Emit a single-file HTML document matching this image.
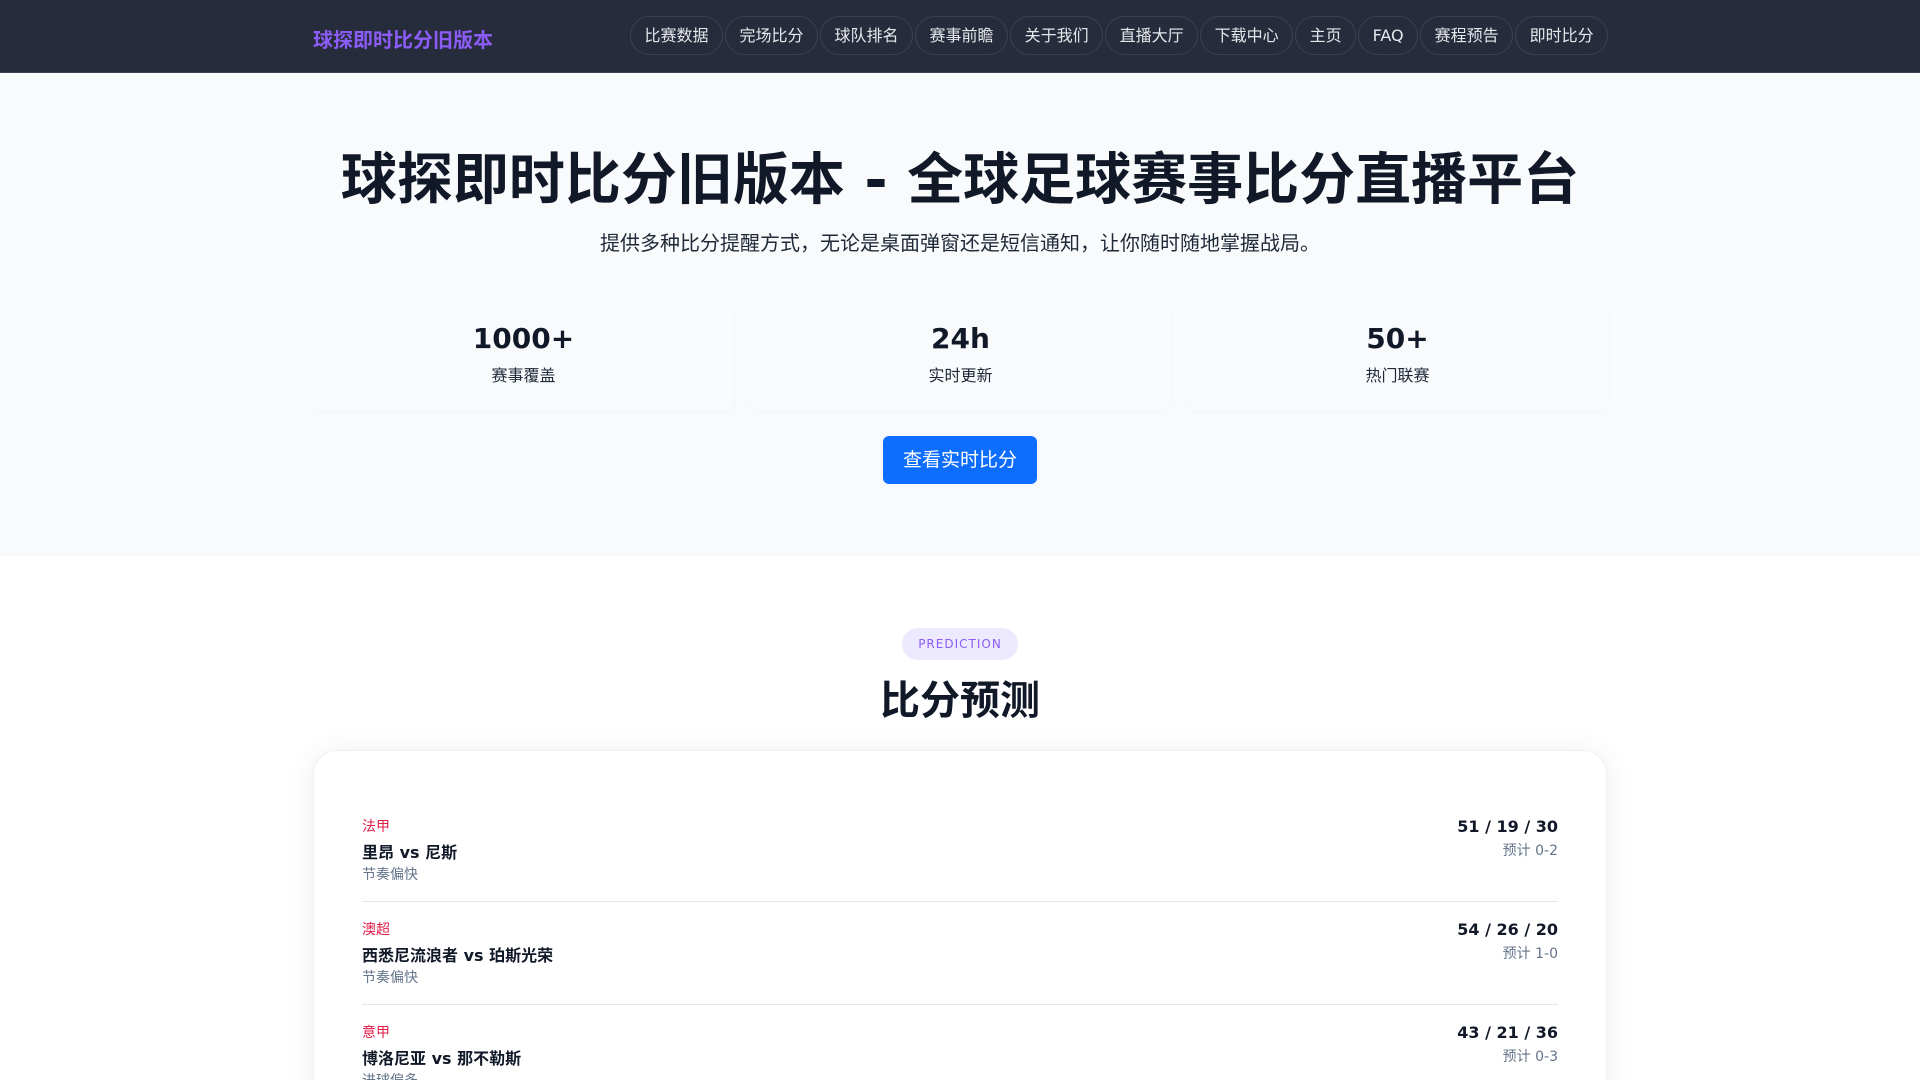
<!DOCTYPE html><html><head><meta charset="utf-8"><style>
*{margin:0;padding:0;box-sizing:border-box}
html{width:1920px;height:1080px;overflow:hidden}
body{width:1920px;height:1080px;overflow:hidden;position:relative;background:#fff;font-family:"DejaVu Sans","Noto Sans CJK SC",sans-serif;color:#111827}
.hd{height:73px;background:#262c3b;position:relative;border-bottom:1px solid #3a4152}
.logo{position:absolute;left:313px;top:24px;font-size:20px;font-weight:bold;color:#8b5cf6}
.nav{position:absolute;left:630px;top:16px;display:flex;gap:2px}
.nav span{height:39px;line-height:37px;padding:0 13.5px;border:1px solid #3a4152;border-radius:20px;color:#e5e7eb;font-size:16px}
.hero{background:#f8fafc;height:483px;text-align:center;position:relative}
h1{position:absolute;left:0;right:0;top:62px;font-size:56px;font-weight:bold;color:#111827}
.sub{position:absolute;left:0;right:0;top:154px;font-size:20px;color:#1f2937}
.stat{position:absolute;top:227px;width:421px;height:110px;background:#f8fafc;box-shadow:0 1px 4px rgba(0,0,0,.03);border-radius:8px;text-align:center}
.stat b{display:block;margin-top:22px;font-size:28px}
.stat i{display:block;font-style:normal;margin-top:7px;font-size:16px;color:#1f2937}
.btn{position:absolute;left:883px;top:363px;width:154px;height:48px;background:#0d6efd;color:#fff;border-radius:6px;font-size:19px;line-height:48px}
.pill{position:absolute;left:902px;top:628px;width:116px;height:32px;border-radius:16px;background:#ede9fe;color:#8b5cf6;font-size:12px;letter-spacing:1px;line-height:32px;text-align:center}
h2{position:absolute;left:0;right:0;top:668px;text-align:center;font-size:40px;font-weight:bold}
.card{position:absolute;left:313px;top:750px;width:1294px;height:360px;background:#fff;border-radius:24px;box-shadow:0 4px 30px rgba(0,0,0,.08);border:1px solid #eef0f3}
.row{position:absolute;left:48px;right:48px;height:86px;border-bottom:1px solid #e5e7eb}
.lg{position:absolute;top:0;color:#e11d48;font-size:14px}
.tm{position:absolute;top:23px;font-size:16px;font-weight:bold}
.nt{position:absolute;top:48px;font-size:14px;color:#64748b}
.sc{position:absolute;right:0;top:1px;font-size:16px;font-weight:bold}
.pr{position:absolute;right:0;top:24px;font-size:14px;color:#64748b}
</style></head><body>
<div class="hd"><div class="logo">球探即时比分旧版本</div>
<div class="nav"><span>比赛数据</span><span>完场比分</span><span>球队排名</span><span>赛事前瞻</span><span>关于我们</span><span>直播大厅</span><span>下载中心</span><span>主页</span><span>FAQ</span><span>赛程预告</span><span>即时比分</span></div></div>
<div class="hero">
<h1>球探即时比分旧版本 - 全球足球赛事比分直播平台</h1>
<div class="sub">提供多种比分提醒方式，无论是桌面弹窗还是短信通知，让你随时随地掌握战局。</div>
<div class="stat" style="left:313px"><b>1000+</b><i>赛事覆盖</i></div>
<div class="stat" style="left:750px"><b>24h</b><i>实时更新</i></div>
<div class="stat" style="left:1187px"><b>50+</b><i>热门联赛</i></div>
<div class="btn">查看实时比分</div>
</div>
<div class="pill">PREDICTION</div>
<h2>比分预测</h2>
<div class="card">
<div class="row" style="top:65px"><div class="lg">法甲</div><div class="tm">里昂 vs 尼斯</div><div class="nt">节奏偏快</div><div class="sc">51 / 19 / 30</div><div class="pr">预计 0-2</div></div>
<div class="row" style="top:168px"><div class="lg">澳超</div><div class="tm">西悉尼流浪者 vs 珀斯光荣</div><div class="nt">节奏偏快</div><div class="sc">54 / 26 / 20</div><div class="pr">预计 1-0</div></div>
<div class="row" style="top:271px"><div class="lg">意甲</div><div class="tm">博洛尼亚 vs 那不勒斯</div><div class="nt">进球偏多</div><div class="sc">43 / 21 / 36</div><div class="pr">预计 0-3</div></div>
</div>
</body></html>
